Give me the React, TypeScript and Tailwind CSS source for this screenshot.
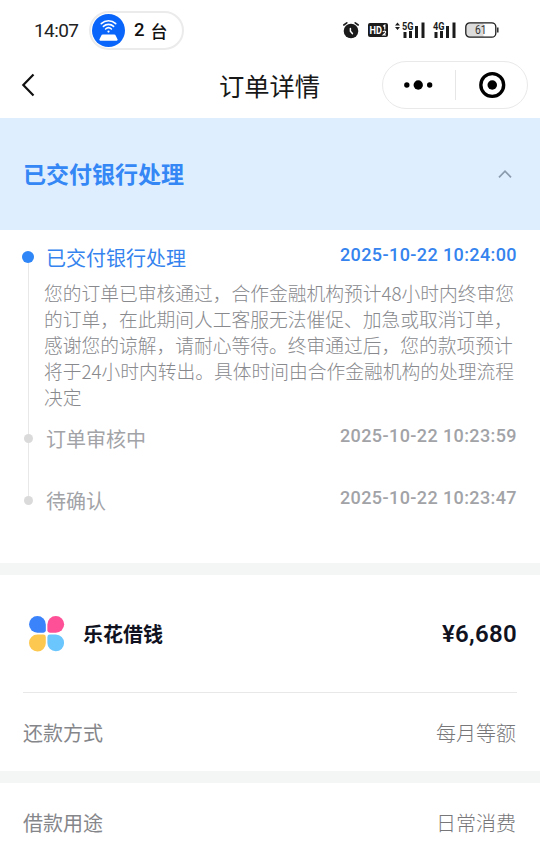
import type { ReactNode } from "react";

function AlarmIcon() {
  return (
    <svg width="16" height="18" viewBox="0 0 16 18" className="block">
      <circle cx="8" cy="10" r="7.3" fill="#1b1b1b" />
      <path d="M0.8 4 3.8 1.8M15.2 4 12.2 1.8" stroke="#1b1b1b" strokeWidth="1.6" strokeLinecap="round" />
      <path d="M7.4 7.4v2.8l2 2.4" stroke="#fff" strokeWidth="1.5" fill="none" strokeLinecap="round" />
    </svg>
  );
}

function HdBadge() {
  return (
    <svg width="20" height="14" viewBox="0 0 20 14" className="block">
      <rect width="20" height="14" rx="2" fill="#1b1b1b" />
      <text x="1.6" y="11" fontSize="11" fontWeight="700" fill="#fff" fontFamily="Roboto, sans-serif" textLength="12.4" lengthAdjust="spacingAndGlyphs">HD</text>
      <path d="M15.2 3.2 16.8 2.2V6.4M15 9.2Q15.2 8 16.4 8 17.8 8.1 17.6 9.4 17.4 10.2 15.2 12H18" fill="none" stroke="#fff" strokeWidth="1.2" />
    </svg>
  );
}

function Signal({ label, arrows }: { label: string; arrows?: boolean }) {
  return (
    <svg width="31" height="18" viewBox="0 0 31 18" className="block">
      {arrows && <path d="M0 4.4 2.5 1.4 5 4.4ZM0 6 2.5 9 5 6Z" fill="#1b1b1b" />}
      <text x="7" y="8.8" fontSize="10.5" fontWeight="700" fill="#1b1b1b" fontFamily="Roboto, sans-serif" textLength="11.5" lengthAdjust="spacingAndGlyphs">{label}</text>
      <path d="M8.5 11h3v6h-3zM14 10h3v7h-3zM20 5h3v12h-3zM26.5 1.5h3V17h-3z" fill="#1b1b1b" />
    </svg>
  );
}

function Battery() {
  return (
    <svg width="34" height="16" viewBox="0 0 34 16" className="block">
      <path d="M5 1H18.5V15H5a4 4 0 0 1-4-4V5a4 4 0 0 1 4-4Z" fill="#dcdcdc" />
      <rect x="0.8" y="0.8" width="30" height="14.4" rx="4" fill="none" stroke="#1b1b1b" strokeWidth="1.3" />
      <path d="M32.8 5.5v5" stroke="#1b1b1b" strokeWidth="1.4" />
      <text x="10" y="12.2" fontSize="12" fill="#333" fontFamily="Roboto, sans-serif" textLength="11.5" lengthAdjust="spacingAndGlyphs">61</text>
    </svg>
  );
}

function HotspotIcon() {
  return (
    <svg width="33" height="33" viewBox="0 0 33 33" className="block">
      <circle cx="16.5" cy="16.5" r="16.5" fill="#0a66fa" />
      <g fill="none" stroke="#fff" strokeWidth="1.6" strokeLinecap="round">
        <path d="M9.3 9.6a10.6 10.6 0 0 1 14.4 0" />
        <path d="M11.4 12.4a7.4 7.4 0 0 1 10.2 0" />
        <path d="M13.6 15a4.3 4.3 0 0 1 5.8 0" />
      </g>
      <circle cx="16.5" cy="17.6" r="1.1" fill="#fff" />
      <path d="M11 20.6h11a2 2 0 0 1 1.9 1.4l1.6 3.2a1 1 0 0 1-1 1.5h-16a1 1 0 0 1-1-1.5L9.1 22a2 2 0 0 1 1.9-1.4Z" fill="#fff" />
    </svg>
  );
}

function PetalLogo() {
  return (
    <svg width="36" height="36" viewBox="0 0 36 36" className="block">
      <path d="M8.4 0A8.4 8.4 0 0 1 16.8 8.4V14.3A2.4 2.4 0 0 1 14.4 16.7H8.4A8.35 8.35 0 0 1 8.4 0Z" fill="#3b83fb" />
      <path d="M26.8 0A8.35 8.35 0 0 1 26.8 16.7H20.8A2.4 2.4 0 0 1 18.4 14.3V8.4A8.4 8.4 0 0 1 26.8 0Z" fill="#fd5096" />
      <path d="M8.4 18.6H14.4A2.4 2.4 0 0 1 16.8 21V26.9A8.4 8.4 0 1 1 8.4 18.6Z" fill="#fdc850" />
      <path d="M20.8 18.6H26.8A8.35 8.35 0 1 1 18.4 26.9V21A2.4 2.4 0 0 1 20.8 18.6Z" fill="#6bc6fd" />
    </svg>
  );
}

function Step({
  title,
  time,
  active,
  first,
  last,
  children,
}: {
  title: string;
  time: string;
  active?: boolean;
  first?: boolean;
  last?: boolean;
  children?: ReactNode;
}) {
  return (
    <div className="flex">
      <div className="flex w-3 flex-none flex-col items-center">
        <div className={`w-px ${active ? "h-[9px]" : "h-[11px]"} ${first ? "" : "bg-[#e8e8e8]"}`} />
        <div className={active ? "size-3 flex-none rounded-full bg-[#2f86f6]" : "size-[9px] flex-none rounded-full bg-[#dadada]"} />
        {!last && <div className="w-px flex-1 bg-[#e8e8e8]" />}
      </div>
      <div className={`ml-2.5 flex-1 ${children ? "pb-[13px]" : "pb-[30px]"}`}>
        <div className={`flex items-start justify-between pl-0.5 ${active ? "text-[#3583ee]" : "text-[#a2a3a7]"}`}>
          <div className="text-[20px] leading-8">{title}</div>
          <div className="font-[Roboto] text-[18px] font-medium leading-[25px] tracking-[0.4px]">{time}</div>
        </div>
        {children}
      </div>
    </div>
  );
}

function DetailRow({ label, value }: { label: string; value: string }) {
  return (
    <div className="flex items-center justify-between pl-[23px] pr-6 text-[20px] leading-[80px]">
      <span className="text-[#85868a]">{label}</span>
      <span className="font-light text-[#77777a]">{value}</span>
    </div>
  );
}

const descriptionLines = [
  "您的订单已审核通过，合作金融机构预计48小时内终审您",
  "的订单，在此期间人工客服无法催促、加急或取消订单，",
  "感谢您的谅解，请耐心等待。终审通过后，您的款项预计",
  "将于24小时内转出。具体时间由合作金融机构的处理流程",
  "决定",
];

export default function App() {
  return (
    <div className="flex h-[866px] w-[540px] flex-col overflow-hidden bg-white font-['Noto_Sans_CJK_SC',sans-serif]">
      <div className="flex h-[60px] flex-none items-center pl-[34px] pr-[42px]">
        <span className="w-[55px] font-[Roboto] text-[19px] leading-none tracking-[-0.6px] text-[#222]">14:07</span>
        <div className="flex h-[39px] w-[95px] items-center rounded-full border-2 border-[#ebebeb] pl-px">
          <HotspotIcon />
          <span className="ml-[9px] flex items-center gap-[6px] text-[17px] font-medium leading-none text-[#111]">
            <span className="font-[Roboto] text-[18.5px]">2</span>
            <span>台</span>
          </span>
        </div>
        <div className="ml-auto flex items-center">
          <AlarmIcon />
          <div className="ml-[9px]"><HdBadge /></div>
          <div className="ml-[7px]"><Signal label="5G" arrows /></div>
          <div><Signal label="4G" /></div>
          <div className="ml-[8px] -mr-[1px]"><Battery /></div>
        </div>
      </div>

      <div className="grid h-[58px] flex-none grid-cols-[1fr_auto_1fr] items-center pb-2">
        <svg width="14" height="24" viewBox="0 0 14 24" className="ml-[21px] block">
          <path d="M12.5 1.5 2.3 12 12.5 22.5" fill="none" stroke="#111" strokeWidth="2.2" />
        </svg>
        <h1 className="pr-px text-[25.3px] leading-[40px] text-[#181818]">订单详情</h1>
        <div className="mr-[12px] flex h-[48px] w-[146px] items-center justify-self-end rounded-full border border-[#e9e9e9]">
          <svg width="72" height="30" viewBox="0 0 72 30" className="block">
            <circle cx="24" cy="15" r="2.7" />
            <circle cx="35.5" cy="15" r="4.7" />
            <circle cx="47" cy="15" r="2.7" />
          </svg>
          <div className="h-[30px] w-px bg-[#e6e6e6]" />
          <svg width="72" height="30" viewBox="0 0 72 30" className="block">
            <circle cx="36.5" cy="15" r="11.5" fill="none" stroke="#000" strokeWidth="3.4" />
            <circle cx="36.5" cy="15" r="4.8" />
          </svg>
        </div>
      </div>

      <div className="flex h-[112px] flex-none items-center justify-between bg-[#deeeff] px-[23px]">
        <h2 className="pb-0.5 text-[23px] font-bold text-[#3487f5]">已交付银行处理</h2>
        <svg width="14" height="10" viewBox="0 0 14 10" className="mr-[5px] block">
          <path d="M1 8.3 7 2.2 13 8.3" fill="none" stroke="#8a9bad" strokeWidth="1.7" />
        </svg>
      </div>

      <div className="h-[333px] flex-none pl-[22px] pr-[23px] pt-3">
        <Step title="已交付银行处理" time="2025-10-22 10:24:00" active first>
          <div className="mt-[6px] whitespace-nowrap text-[18.75px] font-light leading-[26px] text-[#88898d]">
            {descriptionLines.map((line) => (
              <div key={line}>{line}</div>
            ))}
          </div>
        </Step>
        <Step title="订单审核中" time="2025-10-22 10:23:59" />
        <Step title="待确认" time="2025-10-22 10:23:47" last />
      </div>

      <div className="h-3 flex-none bg-[#f4f6f6]" />

      <div className="mx-[23px] flex h-[118px] flex-none items-center border-b border-[#e8e8e8]">
        <div className="ml-[6px]"><PetalLogo /></div>
        <span className="ml-[18px] text-[20px] font-bold text-[#10131f]">乐花借钱</span>
        <span className="ml-auto font-[Roboto] text-[24px] font-semibold tracking-[0.3px] text-[#10131f]">¥6,680</span>
      </div>
      <div className="h-[78px] flex-none"><DetailRow label="还款方式" value="每月等额" /></div>
      <div className="h-3 flex-none bg-[#f4f6f6]" />
      <DetailRow label="借款用途" value="日常消费" />
    </div>
  );
}
